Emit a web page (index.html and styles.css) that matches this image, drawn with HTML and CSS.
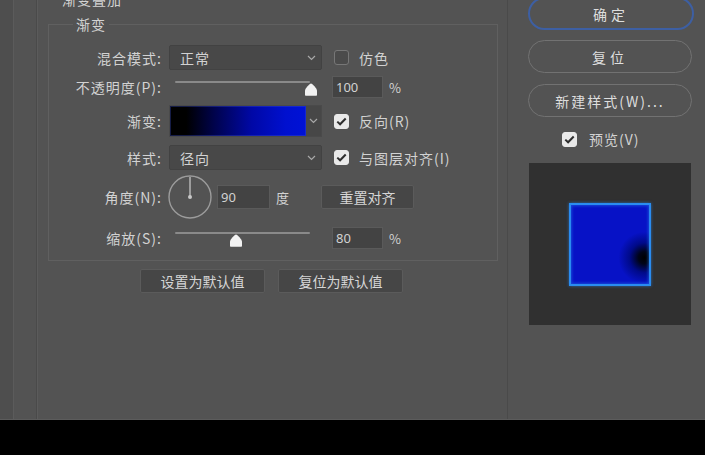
FILE: index.html
```html
<!DOCTYPE html>
<html lang="zh-CN">
<head>
<meta charset="utf-8">
<title>渐变叠加</title>
<link rel="stylesheet" href="styles.css">
</head>
<body>
<div class="window">
  <div class="styles-list"></div>
  <div class="spacer"></div>
  <section class="outer-group">
    <div class="outer-title"><span>渐变叠加</span></div>
    <div class="group">
      <div class="group-title">渐变</div>

      <div class="row r1">
        <span class="lbl">混合模式:</span>
        <div class="select"><span>正常</span>
          <svg class="chev" width="9" height="6" viewBox="0 0 9 6"><path d="M1 1 L4.5 4.5 L8 1" fill="none" stroke="#a8a8a8" stroke-width="1.2"/></svg>
        </div>
        <span class="check"><span class="box"></span>仿色</span>
      </div>

      <div class="row r2">
        <span class="lbl">不透明度(P):</span>
        <div class="slider">
          <div class="track"></div>
          <svg class="thumb" style="left:129px" width="14" height="13" viewBox="0 0 14 13"><path d="M7 0.6 C8.2 0.6 13 5.6 13 7.6 L13 12 Q13 12.8 12.2 12.8 L1.8 12.8 Q1 12.8 1 12 L1 7.6 C1 5.6 5.8 0.6 7 0.6 Z" fill="#f2f2f2"/></svg>
        </div>
        <div class="num">100</div><span class="unit">%</span>
      </div>

      <div class="row r3">
        <span class="lbl">渐变:</span>
        <div class="gradient">
          <div class="ramp"></div>
          <div class="ramp-arrow">
            <svg width="9" height="6" viewBox="0 0 9 6"><path d="M1 1 L4.5 4.5 L8 1" fill="none" stroke="#a8a8a8" stroke-width="1.2"/></svg>
          </div>
        </div>
        <span class="check"><span class="box on"><svg width="11" height="9" viewBox="0 0 11 9"><path d="M1.3 4.6 L4.1 7.3 L9.7 1.5" fill="none" stroke="#2e2e2e" stroke-width="2"/></svg></span>反向(R)</span>
      </div>

      <div class="row r4">
        <span class="lbl">样式:</span>
        <div class="select"><span>径向</span>
          <svg class="chev" width="9" height="6" viewBox="0 0 9 6"><path d="M1 1 L4.5 4.5 L8 1" fill="none" stroke="#a8a8a8" stroke-width="1.2"/></svg>
        </div>
        <span class="check"><span class="box on"><svg width="11" height="9" viewBox="0 0 11 9"><path d="M1.3 4.6 L4.1 7.3 L9.7 1.5" fill="none" stroke="#2e2e2e" stroke-width="2"/></svg></span>与图层对齐(I)</span>
      </div>

      <div class="row r5">
        <span class="lbl">角度(N):</span>
        <svg class="dial" width="44" height="44" viewBox="0 0 44 44">
          <circle cx="22" cy="22" r="21" fill="none" stroke="#9c9c9c" stroke-width="1.4"/>
          <line x1="22" y1="22" x2="22" y2="2" stroke="#bdbdbd" stroke-width="1.4"/>
          <circle cx="22" cy="22" r="2" fill="#c8c8c8"/>
        </svg>
        <div class="num angle">90</div><span class="unit">度</span>
        <button class="flat realign">重置对齐</button>
      </div>

      <div class="row r6">
        <span class="lbl">缩放(S):</span>
        <div class="slider">
          <div class="track"></div>
          <svg class="thumb" style="left:54px" width="14" height="13" viewBox="0 0 14 13"><path d="M7 0.6 C8.2 0.6 13 5.6 13 7.6 L13 12 Q13 12.8 12.2 12.8 L1.8 12.8 Q1 12.8 1 12 L1 7.6 C1 5.6 5.8 0.6 7 0.6 Z" fill="#f2f2f2"/></svg>
        </div>
        <div class="num">80</div><span class="unit">%</span>
      </div>
    </div>

    <div class="defaults">
      <button class="flat wide">设置为默认值</button>
      <button class="flat wide">复位为默认值</button>
    </div>
  </section>

  <aside class="side">
    <button class="pill primary">确定</button>
    <button class="pill">复位</button>
    <button class="pill">新建样式(W)...</button>
    <div class="preview-toggle">
      <span class="box on"><svg width="11" height="9" viewBox="0 0 11 9"><path d="M1.3 4.6 L4.1 7.3 L9.7 1.5" fill="none" stroke="#2e2e2e" stroke-width="2"/></svg></span>
      <span>预览(V)</span>
    </div>
    <div class="preview">
      <div class="swatch"></div>
    </div>
  </aside>
</div>
<div class="footer"></div>
</body>
</html>
```

FILE: styles.css
```css
* { box-sizing: border-box; }

html, body {
  margin: 0;
  padding: 0;
  background: #000;
  overflow: hidden;
}

body {
  font-family: "Noto Sans CJK SC", "Noto Sans", sans-serif;
  font-size: 14px;
  color: #d2d2d2;
  letter-spacing: 1px;
}

.window {
  display: flex;
  height: 420px;
  background: #535353;
  border-bottom: 1px solid #5c5c5c;
}

.styles-list {
  width: 14px;
  background: #4e4e4e;
  border-right: 1px solid #5b5b5b;
}

.spacer {
  width: 22px;
}

.outer-group {
  width: 472px;
  border-left: 1px solid #4a4a4a;
  border-right: 1px solid #4a4a4a;
  box-shadow: inset 1px 0 0 #5b5b5b;
  padding: 0 9px 0 11px;
}

.outer-title {
  display: flow-root;
  height: 24px;
  padding-left: 14px;
}

.outer-title span {
  display: block;
  margin-top: -9px;
  line-height: 16px;
}

.group {
  display: flow-root;
  width: 450px;
  height: 237px;
  border: 1px solid #606060;
  padding-bottom: 10px;
}

.group-title {
  width: fit-content;
  margin: -9px 0 0 24px;
  padding: 0 3px;
  line-height: 16px;
  background: #535353;
}

.row {
  display: flex;
  align-items: center;
}

.r1 { margin-top: 13px; height: 25px; }
.r2 { margin-top: 6px; height: 22px; }
.r3 { margin-top: 7px; height: 32px; }
.r4 { margin-top: 8px; height: 25px; }
.r5 { margin-top: 5px; height: 44px; }
.r6 { margin-top: 8px; height: 22px; }

.lbl {
  width: 113px;
  text-align: right;
  white-space: nowrap;
  line-height: 16px;
}

.select {
  margin-left: 7px;
  width: 153px;
  height: 25px;
  background: #484848;
  border: 1px solid #424242;
  border-radius: 2px;
  display: flex;
  align-items: center;
  justify-content: space-between;
  padding: 0 5px 0 10px;
}

.select span { line-height: 16px; }

.chev { margin-top: 1px; }

.check {
  display: flex;
  align-items: center;
  margin-left: 12px;
  gap: 10px;
  white-space: nowrap;
  line-height: 16px;
}

.box {
  width: 15px;
  height: 15px;
  border: 1.5px solid #777777;
  border-radius: 3px;
  background: #4b4b4b;
  display: flex;
  align-items: center;
  justify-content: center;
  flex: none;
}

.box.on {
  background: #e9e9e9;
  border-color: #e9e9e9;
}

.slider {
  position: relative;
  align-self: stretch;
  margin-left: 7px;
  width: 153px;
  padding: 5px 12px 0 6px;
}

.track {
  height: 2px;
  background: #8a8a8a;
  border-radius: 1px;
}

.thumb {
  position: absolute;
  top: 7px;
  margin-left: 6px;
}

.num {
  margin-left: 10px;
  width: 51px;
  height: 22px;
  background: #434343;
  border: 1px solid #5a5a5a;
  font-size: 13px;
  letter-spacing: 0;
  line-height: 20px;
  padding-left: 3px;
  font-family: "Noto Sans", "Liberation Sans", sans-serif;
}

.unit {
  margin-left: 6px;
  font-size: 13px;
}

.gradient {
  margin-left: 7px;
  width: 153px;
  height: 32px;
  display: flex;
  border: 1px solid #4a4a4a;
}

.ramp {
  width: 136px;
  background: linear-gradient(to right, #000 0%, #000 12%, #00034a 32%, #0008a6 60%, #0010cf 85%, #0012d6 100%);
  box-shadow: inset 0 0 0 1px rgba(60, 80, 200, 0.35);
}

.ramp-arrow {
  flex: 1;
  background: #474747;
  display: flex;
  align-items: center;
  justify-content: center;
}

.dial {
  margin-left: 6px;
}

.num.angle {
  margin-left: 5px;
  width: 53px;
  height: 24px;
  line-height: 22px;
}

.flat {
  font-family: inherit;
  font-size: 14px;
  letter-spacing: 0;
  color: #d6d6d6;
  background: #464646;
  border: 1px solid #5b5b5b;
  border-radius: 2px;
  padding: 0;
  line-height: 16px;
}

.realign {
  margin-left: 31px;
  width: 93px;
  height: 24px;
}

.defaults {
  display: flex;
  justify-content: center;
  gap: 13px;
  margin-top: 8px;
  padding-right: 3px;
}

.wide {
  width: 125px;
  height: 24px;
}

.side {
  flex: 1;
  padding-left: 20px;
  display: flex;
  flex-direction: column;
}

.pill {
  width: 164px;
  height: 33px;
  border-radius: 17px;
  border: 1.5px solid #727272;
  background: #535353;
  color: #dedede;
  font-family: inherit;
  font-size: 14px;
  letter-spacing: 2px;
  padding: 0;
  line-height: 16px;
  margin-top: 10px;
}

.pill.primary {
  margin-top: -3px;
  width: 166px;
  border: 2px solid #3d5fa3;
  letter-spacing: 4px;
}

.pill:nth-child(2) { letter-spacing: 4px; }
.pill:nth-child(3) { margin-top: 11px; }

.preview-toggle {
  display: flex;
  align-items: center;
  gap: 12px;
  margin: 14px 0 0 34px;
  height: 16px;
  line-height: 16px;
}

.preview {
  margin: 16px 0 0 1px;
  width: 162px;
  height: 162px;
  background: #303030;
  display: flex;
  align-items: center;
  justify-content: center;
}

.swatch {
  width: 82px;
  height: 83px;
  background:
    radial-gradient(circle at 92% 66%, #000 0px, #000418 6px, #000a8a 15px, rgba(0, 16, 200, 0) 26px),
    #0712c6;
  box-shadow: inset 0 0 0 2px #2a8cf0, inset 0 0 3px 3px rgba(40, 130, 240, 0.5), 0 0 3px rgba(40, 140, 255, 0.6);
}

.footer {
  height: 35px;
  background: #000;
}
```
